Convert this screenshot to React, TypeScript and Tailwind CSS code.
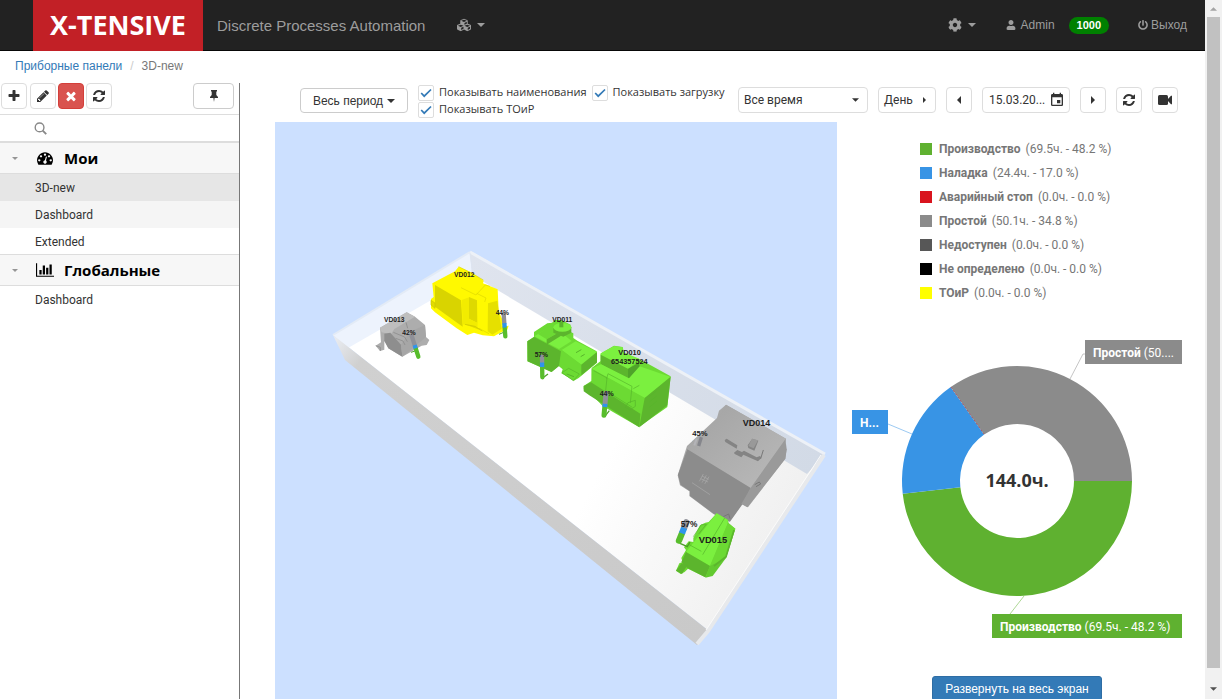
import React from "react";
import { FaCog, FaCubes, FaPowerOff, FaUser } from "react-icons/fa";
import { MdEvent } from "react-icons/md";

const ARIAL = "font-['Liberation_Sans',sans-serif]";

const PATHS = {
  plus: "M1600 736v192q0 40-28 68t-68 28h-416v416q0 40-28 68t-68 28h-192q-40 0-68-28t-28-68v-416h-416q-40 0-68-28t-28-68v-192q0-40 28-68t68-28h416v-416q0-40 28-68t68-28h192q40 0 68 28t28 68v416h416q40 0 68 28t28 68z",
  times:
    "M1490 1322q0 40-28 68l-136 136q-28 28-68 28t-68-28l-294-294-294 294q-28 28-68 28t-68-28l-136-136q-28-28-28-68t28-68l294-294-294-294q-28-28-28-68t28-68l136-136q28-28 68-28t68 28l294 294 294-294q28-28 68-28t68 28l136 136q28 28 28 68t-28 68l-294 294 294 294q28 28 28 68z",
  pencil:
    "M491 1536l91-91-235-235-91 91v107h128v128h107zm523-928q0-22-22-22-10 0-17 7l-542 542q-7 7-7 17 0 22 22 22 10 0 17-7l542-542q7-7 7-17zm-54-192l416 416-832 832h-416v-416zm683 96q0 53-37 90l-166 166-416-416 166-165q36-38 90-38 53 0 91 38l235 234q37 39 37 91z",
  refresh:
    "M1639 1056q0 5-1 7-64 268-268 434.5t-478 166.5q-146 0-282.5-55t-243.5-157l-129 129q-19 19-45 19t-45-19-19-45v-448q0-26 19-45t45-19h448q26 0 45 19t19 45-19 45l-137 137q71 66 161 102t187 36q134 0 250-65t186-179q11-17 53-117 8-23 30-23h192q13 0 22.5 9.5t9.5 22.5zm25-800v448q0 26-19 45t-45 19h-448q-26 0-45-19t-19-45 19-45l138-138q-148-137-349-137-134 0-250 65t-186 179q-11 17-53 117-8 23-30 23h-199q-13 0-22.5-9.5t-9.5-22.5v-7q65-268 270-434.5t480-166.5q146 0 284 55.5t245 156.5l130-129q19-19 45-19t45 19 19 45z",
  gauge:
    "M384 1152q0-53-37.5-90.5t-90.5-37.5-90.5 37.5-37.5 90.5 37.5 90.5 90.5 37.5 90.5-37.5 37.5-90.5zm192-448q0-53-37.5-90.5t-90.5-37.5-90.5 37.5-37.5 90.5 37.5 90.5 90.5 37.5 90.5-37.5 37.5-90.5zm428 481l101-382q6-26-7.5-48.5t-38.5-29.5-48 6.5-30 39.5l-101 382q-60 5-107 43.5t-63 98.5q-20 77 20 146t117 89 146-20 89-117q16-60-6-117t-72-91zm660-33q0-53-37.5-90.5t-90.5-37.5-90.5 37.5-37.5 90.5 37.5 90.5 90.5 37.5 90.5-37.5 37.5-90.5zm-640-640q0-53-37.5-90.5t-90.5-37.5-90.5 37.5-37.5 90.5 37.5 90.5 90.5 37.5 90.5-37.5 37.5-90.5zm448 192q0-53-37.5-90.5t-90.5-37.5-90.5 37.5-37.5 90.5 37.5 90.5 90.5 37.5 90.5-37.5 37.5-90.5zm320 448q0 261-141 483-19 29-54 29h-1402q-35 0-54-29-141-221-141-483 0-182 71-348t191-286 286-191 348-71 348 71 286 191 191 286 71 348z",
  bars: "M640 896v512h-256v-512h256zm384-512v1024h-256v-1024h256zm1024 1152v128h-2048v-1536h128v1408h1920zm-640-896v768h-256v-768h256zm384-384v1152h-256v-1152h256z",
};

function Glyph({ name, box = "0 0 1792 1792", className }: { name: keyof typeof PATHS; box?: string; className: string }) {
  return (
    <svg viewBox={box} className={className} fill="currentColor" aria-hidden="true">
      <path d={PATHS[name]} />
    </svg>
  );
}

function Arrow({ dir, className }: { dir: "down" | "left" | "right"; className: string }) {
  const d = { down: "M0 0h8L4 4z", left: "M4 0v8L0 4z", right: "M0 0v8l4-4z" }[dir];
  return (
    <svg viewBox={dir === "down" ? "0 0 8 4" : "0 0 4 8"} className={className} fill="currentColor" aria-hidden="true">
      <path d={d} />
    </svg>
  );
}

function IconButton({ label, className = "", children }: { label: string; className?: string; children: React.ReactNode }) {
  return (
    <button
      type="button"
      aria-label={label}
      className={`flex h-[26px] shrink-0 items-center justify-center rounded border ${className || "w-[26px] border-[#ddd] bg-white text-[#333]"}`}
    >
      {children}
    </button>
  );
}

function Check({ label }: { label: string }) {
  return (
    <label className="flex h-[17px] items-center whitespace-nowrap">
      <span className="relative mr-[5px] h-4 w-4">
        <input type="checkbox" defaultChecked className="peer block h-4 w-4 appearance-none rounded-[2px] border border-[#ddd] bg-white" />
        <svg viewBox="0 0 16 16" className="pointer-events-none absolute inset-0 hidden h-4 w-4 peer-checked:block" fill="none" stroke="#337ab7" strokeWidth="1.7">
          <path d="M3.2 8l3 3.2L13 4.5" />
        </svg>
      </span>
      {label}
    </label>
  );
}

function Header() {
  return (
    <header className={`flex h-[51px] shrink-0 items-center border-b border-[#080808] bg-[#222] text-[#9d9d9d] ${ARIAL}`}>
      <a href="#" className="ml-[33px] flex h-[51px] w-[170px] shrink-0 items-center justify-center bg-[#c22026] font-['Open_Sans',sans-serif] text-[27px] font-bold text-white">
        X-TENSIVE
      </a>
      <span className="ml-[14px] pt-[2px] text-[15px]">Discrete Processes Automation</span>
      <button type="button" aria-label="Модули" className="ml-8 flex items-center gap-[6px]">
        <FaCubes className="h-[14px] w-[14px]" />
        <Arrow dir="down" className="h-1 w-2" />
      </button>
      <nav className="mr-[18px] ml-auto flex items-center text-[12px]">
        <button type="button" aria-label="Настройки" className="flex items-center gap-[6px]">
          <FaCog className="h-[14px] w-[14px]" />
          <Arrow dir="down" className="h-1 w-2" />
        </button>
        <a href="#" className="ml-[30px] flex items-center gap-[5px]">
          <FaUser className="h-[10px] w-[10px]" />
          Admin
        </a>
        <span className="ml-[14px] rounded-full bg-[#008000] px-2 text-[11px] leading-[17px] font-bold text-white">1000</span>
        <a href="#" className="ml-[29px] flex items-center gap-[3px]">
          <FaPowerOff className="h-[10px] w-[10px]" />
          Выход
        </a>
      </nav>
    </header>
  );
}

function Group({ title, icon, items, active }: { title: string; icon: React.ReactNode; items: string[]; active?: number }) {
  return (
    <section className="not-first:-mt-px">
      <h2 className="flex h-8 items-center border-y border-[#ddd] bg-[#f7f7f7] pl-3 font-['Open_Sans',sans-serif] text-[15px] font-bold text-black">
        <Arrow dir="down" className="h-[3px] w-[6px] text-[#959595]" />
        <span className="ml-[18px] flex w-5 justify-start">{icon}</span>
        <span className="ml-2">{title}</span>
      </h2>
      <ul>
        {items.map((item, i) => (
          <li key={item} className={active === undefined ? "" : i === active ? "bg-[#e6e6e6]" : i === active + 1 ? "bg-[#f5f5f5]" : ""}>
            <a href="#" className="block h-[27px] pl-[35px] text-[12px] leading-[28px] text-[#333]">
              {item}
            </a>
          </li>
        ))}
      </ul>
    </section>
  );
}

function Sidebar() {
  return (
    <aside className="w-60 shrink-0 border-r border-[#777]">
      <div className="flex h-8 items-start gap-[2px] border-b border-[#ddd] pr-[5px] pl-px">
        <IconButton label="Добавить">
          <Glyph name="plus" className="h-[14px] w-[14px]" />
        </IconButton>
        <IconButton label="Изменить" className="ml-px w-[26px] border-[#ddd] bg-white text-[#333]">
          <Glyph name="pencil" className="h-[14px] w-[14px]" />
        </IconButton>
        <IconButton label="Удалить" className="w-[26px] border-[#d43f3a] bg-[#d9534f] text-white">
          <Glyph name="times" className="h-[14px] w-[14px]" />
        </IconButton>
        <IconButton label="Обновить">
          <Glyph name="refresh" className="h-[14px] w-[14px]" />
        </IconButton>
        <IconButton label="Закрепить" className="ml-auto w-[41px] border-[#ccc] bg-white text-[#333]">
          <svg viewBox="0 0 10 12" className="h-3 w-[10px]" fill="currentColor">
            <path d="M2 0h6v1.500H7.300V5L9 7v1H5.600L5 12l-.6-4H1V7l1.700-2V1.500H2z" />
          </svg>
        </IconButton>
      </div>
      <label className="flex h-[26px] items-center pl-[34px]">
        <svg viewBox="0 0 14 14" className="h-[13px] w-[13px]" fill="none" stroke="#888" strokeWidth="1.500">
          <circle cx="6" cy="5.800" r="4.700" />
          <path d="M9.400 9.300l3.800 3.800" strokeWidth="2" />
        </svg>
        <input type="text" aria-label="Поиск" className="ml-2 w-[150px] text-[12px] outline-none" />
      </label>
      <div className="border-t border-[#ddd]">
        <Group title="Мои" active={0} items={["3D-new", "Dashboard", "Extended"]} icon={<Glyph name="gauge" className="ml-px h-4 w-4" />} />
        <Group title="Глобальные" items={["Dashboard"]} icon={<Glyph name="bars" box="0 0 2048 1792" className="h-4 w-[18px]" />} />
      </div>
    </aside>
  );
}

function Toolbar() {
  return (
    <div className="flex h-[39px] shrink-0 items-start pr-[27px] pl-[60px] text-[12px] text-[#333]">
      <button type="button" className={`mt-[5px] flex h-[25px] w-[108px] shrink-0 items-center justify-center gap-1 rounded border border-[#ccc] bg-white ${ARIAL}`}>
        Весь период
        <Arrow dir="down" className="h-1 w-2" />
      </button>
      <div className="ml-[10px] flex w-[320px] flex-wrap gap-x-[5px] pt-px font-['Open_Sans',sans-serif] text-[11px]">
        <Check label="Показывать наименования" />
        <Check label="Показывать загрузку" />
        <Check label="Показывать ТОиР" />
      </div>
      <div className="mt-1 ml-auto flex gap-[10px]">
        <div className="relative">
          <select aria-label="Период" className="h-[26px] w-[130px] appearance-none rounded border border-[#ddd] bg-white pl-[5px]">
            <option>Все время</option>
          </select>
          <Arrow dir="down" className="pointer-events-none absolute top-[11px] right-[9px] h-[4px] w-[7px]" />
        </div>
        <button type="button" className="flex h-[26px] w-[58px] items-center gap-[10px] rounded border border-[#ddd] bg-white pl-[5px]">
          День
          <Arrow dir="right" className="h-[6px] w-[3px]" />
        </button>
        <IconButton label="Назад">
          <Arrow dir="left" className="h-2 w-1" />
        </IconButton>
        <div className="flex h-[26px] w-[88px] items-center rounded border border-[#ddd] bg-white pl-[6px]">
          <input type="text" aria-label="Дата" defaultValue="15.03.20..." className="w-[60px] outline-none" />
          <MdEvent className="h-4 w-4 shrink-0" />
        </div>
        <IconButton label="Вперёд">
          <Arrow dir="right" className="h-2 w-1" />
        </IconButton>
        <IconButton label="Обновить данные">
          <Glyph name="refresh" className="h-[14px] w-[14px]" />
        </IconButton>
        <IconButton label="Камера">
          <svg viewBox="0 0 14 10" className="h-[10px] w-[14px]" fill="currentColor">
            <rect width="10" height="10" rx="1.500" />
            <path d="M9 5l4-4.200h1v8.400h-1z" />
          </svg>
        </IconButton>
      </div>
    </div>
  );
}

const GL = "#7bf03f";
const GM = "#6cda33";
const GD = "#5cb52d";

function Load({ x1, y1, x2, y2, blue = 0.5, green = 0.62, w = 13 }: { x1: number; y1: number; x2: number; y2: number; blue?: number; green?: number; w?: number }) {
  const at = (t: number): [number, number] => [x1 + (x2 - x1) * t, y1 + (y2 - y1) * t];
  const [bx, by] = at(blue);
  const [gx, gy] = at(green);
  return (
    <g strokeWidth={w}>
      <path d={`M${x1} ${y1}L${bx} ${by}`} stroke="#8f9098" strokeLinecap="round" />
      <path d={`M${gx} ${gy}L${x2} ${y2}`} stroke="#58bd2c" strokeLinecap="round" />
      <path d={`M${bx} ${by}L${gx} ${gy}`} stroke="#2f95ec" />
    </g>
  );
}

function Scene() {
  return (
    <svg viewBox="275 122 562 577" className="block h-[577px] w-full bg-[#cce0ff]" preserveAspectRatio="xMidYMin meet" role="img" aria-label="План цеха">
      <defs>
        <linearGradient id="front" gradientUnits="userSpaceOnUse" x1="335" y1="340" x2="700" y2="640">
          <stop offset="0" stopColor="#e8ebf0" />
          <stop offset="0.07" stopColor="#d0d0d0" />
          <stop offset="1" stopColor="#c9c9c9" />
        </linearGradient>
        <linearGradient id="floor" gradientUnits="userSpaceOnUse" x1="600" y1="470" x2="770" y2="560">
          <stop offset="0" stopColor="#ffffff" />
          <stop offset="1" stopColor="#f0f0f0" />
        </linearGradient>
        <linearGradient id="back" gradientUnits="userSpaceOnUse" x1="470" y1="260" x2="820" y2="460">
          <stop offset="0" stopColor="#dfe4ee" />
          <stop offset="1" stopColor="#d2dae6" />
        </linearGradient>
        <linearGradient id="grayTop" x1="0" y1="0" x2="1" y2="1">
          <stop offset="0" stopColor="#a2a2a2" />
          <stop offset="1" stopColor="#bababa" />
        </linearGradient>
      </defs>
      <path d="M333 335L472 252 825 454 709 631z" fill="url(#floor)" />
      <path d="M333 335L470 252l3 24-125 72z" fill="#edf3fd" />
      <path d="M470 252l355 202-18 20-335-199z" fill="url(#back)" />
      <path d="M470 252l355 202" stroke="#edf1f7" strokeWidth="3" />
      <path d="M333 335L470 252" stroke="#e3ebf6" strokeWidth="2" />
      <path d="M470 253l3 23" stroke="#dde4f0" />
      <path d="M333 335l376 296-12 14-352-285z" fill="url(#front)" />
      <path d="M824 455L708 631l-11 13" stroke="#e7e9ec" strokeWidth="4" fill="none" />
      <path d="M821 455L706 630" stroke="#fafafa" strokeWidth="1" fill="none" />

      <g transform="translate(325 245) scale(0.33333)">
        <path d="M165 248l80-46 25 13 30 25 3 36 10 9-8 15-15 2-58 33-42-25-12-22v26l-13 4-13-16 16-10z" fill="#adadad" />
        <path d="M165 248l80-46 25 13-62 37-10 16-28-6z" fill="#bebebe" />
        <path d="M178 266l18-3 32 36 4 36-42-25-12-23z" fill="#8e8e8e" />
        <path d="M228 299l26-38 46-21 3 36-71 59z" fill="#a6a6a6" />
        <path d="M205 262l34 14 8 14M212 280l22 8 6 12M243 232l5 18M152 302l14 5v11" stroke="#858585" strokeWidth="2" fill="none" />
        <path d="M258 322l18-6" stroke="#4fa32a" strokeWidth="3" />
        <Load x1={260} y1={272} x2={280} y2={335} blue={0.45} green={0.6} />

        <path d="M322 115l68-36 11-14 40 18 35 24-2 8 44 18 3 66 20 45 10-2-4 12-18 8-22 12-34-3-26-8-20 7-32-20-65-48-12-12v-28l8-6z" fill="#fff900" />
        <path d="M330 120l78 46 5 79-83-60z" fill="#d9d400" />
        <path d="M432 156l24 10 1 68-25-13z" fill="#ded900" />
        <path d="M410 165l22-8v64l26 13-1 16-44-12z" fill="#f2ec00" />
        <path d="M489 175l28-8 6 46 7 38-28 18-14-10z" fill="#e6e000" />
        <path d="M318 166l12 8v16l-12-10zM420 238l30 6 22 14" stroke="#cbc600" strokeWidth="2" fill="#e2dc00" />
        <path d="M401 65l36 18 38 22M408 128l45 22 28-30 14 4M455 145l28 14-4 12M462 250l30 16" stroke="#dcd700" strokeWidth="2" fill="none" />
        <path d="M522 268l14-6" stroke="#4fa32a" strokeWidth="3" />
        <Load x1={536} y1={208} x2={541} y2={274} blue={0.4} green={0.6} />
        <g fill="#1c1c1c" fontFamily="Liberation Sans, sans-serif" fontWeight="bold" fontSize="20">
          <text x="177" y="232">VD013</text>
          <text x="387" y="96">VD012</text>
          <text x="232" y="270">42%</text>
          <text x="512" y="209">44%</text>
        </g>
      </g>

      <g transform="translate(500 300) scale(0.33333)">
        <path d="M82 124l20-14v-14l40-26 14-2 10-8h18l28 14v22l8 4v14l12 8 58 32 1 34-55 46-14 8-38-22 4-12-12-10-22 18-72-32z" fill={GM} />
        <path d="M82 124l21-13 80 43-6 44-22 18-72-32z" fill={GD} />
        <path d="M103 109l40-24 42 14 30 24-38 24z" fill={GL} />
        <path d="M114 102l38-24 28 16-40 24z" fill={GM} />
        <path d="M140 118l42-24v14l-42 26zM160 84q26 14 54-4v18l-24 12-30-12z" fill={GD} />
        <ellipse cx="187" cy="82" rx="27" ry="13" fill={GL} />
        <path d="M178 66h12v16h-12z" fill={GD} />
        <path d="M185 150l42-26 64 32-47 38z" fill={GL} />
        <path d="M185 150l59 44v32l-62-40z" fill={GM} />
        <path d="M244 194l47-38v31l-47 39z" fill={GD} />
        <path d="M186 218l20-13 32 17-18 20z" fill={GM} stroke="#56b52a" strokeWidth="2" />
        <path d="M200 222l22 8M228 158l16-9M242 170l12-7" stroke="#56b52a" strokeWidth="3" />

        <path d="M251 258l24-16v-38l27-21v-22l40-24 26 4 4 18 50 20 90 50-10 92-82 58-112-64-40-36-17-11z" fill={GM} />
        <path d="M302 160l40-22 26 4 0 14 50 20-34 32-82-26z" fill={GL} />
        <path d="M302 164l82 42v30l-82-44z" fill={GD} />
        <path d="M384 206l32-18 8 26-40 24z" fill="#4fa32a" />
        <path d="M275 206l28-13 84 42 32-36 93 32-78 64-46-26z" fill={GL} />
        <path d="M275 206l160 88-17 88-110-64-34-36z" fill={GM} />
        <path d="M251 258l22-11 148 94-3 41-150-96-17-12z" fill={GD} />
        <path d="M434 294l78-64-10 86-84 66z" fill={GD} />
        <path d="M320 236l4-15 72 38-5 50M281 212l40 22-4 38 80 50M400 266l18-10M448 290l22-18M448 306l22-18M448 322l22-18M384 308l22-7v18l-16 11-14-8z" stroke="#56b52a" strokeWidth="2" fill="none" />
        <path d="M128 234l16-12M314 350l14-18" stroke="#4fa32a" strokeWidth="4" />
        <Load x1={126} y1={170} x2={127} y2={232} blue={0.28} green={0.5} />
        <Load x1={318} y1={280} x2={312} y2={346} blue={0.48} green={0.62} w={15} />
        <g fill="#1c1c1c" fontFamily="Liberation Sans, sans-serif" fontWeight="bold" fontSize="20">
          <text x="157" y="67">VD011</text>
          <text x="104" y="170">57%</text>
          <text x="299" y="288" fontSize="21">44%</text>
          <text x="355" y="164" fontSize="22">VD010</text>
          <text x="333" y="192" fontSize="22">654357524</text>
        </g>
      </g>

      <g transform="translate(660 390) scale(0.33333)">
        <path d="M97 152l6 4-3 8-5-3z" fill="#2f95ec" />
        <path d="M198 44l180 102-4 24 6 8-4 28-112 146-18-10-38 53-48-23-72-54v-14l-28-18-7-30 28-88 90-84 6-22z" fill="#a8a8a8" />
        <path d="M198 44l180 102-106 148L82 178l90-82 8-24z" fill="url(#grayTop)" />
        <path d="M82 178l190 116-24 48-38 53-48-23-72-54v-14l-28-20-8-30z" fill="#8c8c8c" />
        <path d="M272 294l104-146 4 30-4 28-114 146-18-10z" fill="#9a9a9a" />
        <path d="M194 150l6-4 32 20-2 10-34-20zM263 166l14-20 18 6-12 30-18-8zM222 188l10-8 14 6 6-4 38 20 10-4 4 6-10 10-44-20-6 8-20-10z" fill="#848484" />
        <path d="M276 146l18 5-13 24-16-7z" fill="#999" />
        <path d="M310 180l-8 26M284 284l14-8 4 6-14 8M190 380l16-8 4 14" stroke="#777" strokeWidth="3" fill="none" />
        <path d="M96 278l54 36M118 274l12-22M126 278l13-22M134 282l13-22M122 266l22 10M126 258l20 10" stroke="#aaa" strokeWidth="2" />
        <path d="M124 142l-8 26" stroke="#85868c" strokeWidth="10" />
        <path d="M110 146l-7 20" stroke="#b4b4b8" strokeWidth="6" />

        <path d="M170 370l34 20 2 10 20 16-28 88-40 32-22 26-52-26-10 10-12 6-14-10 10-22 10-4-4-12 14-24-6-8 14-18 14 2 0-12 20-38 16-8 10-2z" fill={GM} />
        <path d="M170 370l34 20-2 14-52 124-72-42 38-48z" fill={GL} />
        <path d="M204 398l22 18-28 88-48 24z" fill={GM} />
        <path d="M78 486l72 42-14 34-54-28-18-18z" fill={GD} />
        <path d="M150 528l48-24-40 54-22 5z" fill="#62c930" />
        <path d="M222 420l-24 80-36 28" stroke={GD} strokeWidth="5" fill="none" />
        <path d="M48 542l16-22 18 6-16 26z" fill={GD} />
        <path d="M128 494l66-110M116 432l22-28M84 462l40 22M100 440l24-36h16" stroke="#55b22a" strokeWidth="2" fill="none" />
        <path d="M60 460l22 10 8-14" stroke="#4a9c28" strokeWidth="4" fill="none" />
        <Load x1={79} y1={397} x2={57} y2={452} blue={0.3} green={0.6} w={19} />
        <g fill="#1c1c1c" fontFamily="Liberation Sans, sans-serif" fontWeight="bold">
          <text x="248" y="107" fontSize="27">VD014</text>
          <text x="116" y="459" fontSize="28">VD015</text>
          <text x="97" y="139" fontSize="23">45%</text>
          <text x="62" y="412" fontSize="25">57%</text>
        </g>
      </g>
    </svg>
  );
}

const LEGEND = [
  { name: "Производство", value: "(69.5ч. - 48.2 %)", color: "bg-[#5fb130]" },
  { name: "Наладка", value: "(24.4ч. - 17.0 %)", color: "bg-[#3894e5]" },
  { name: "Аварийный стоп", value: "(0.0ч. - 0.0 %)", color: "bg-[#d9141e]" },
  { name: "Простой", value: "(50.1ч. - 34.8 %)", color: "bg-[#8b8b8b]" },
  { name: "Недоступен", value: "(0.0ч. - 0.0 %)", color: "bg-[#575757]" },
  { name: "Не определено", value: "(0.0ч. - 0.0 %)", color: "bg-black" },
  { name: "ТОиР", value: "(0.0ч. - 0.0 %)", color: "bg-[#ffff00]" },
];

function arc(from: number, to: number) {
  const cx = 180;
  const cy = 151;
  const pt = (r: number, a: number) => `${cx + r * Math.cos((a * Math.PI) / 180)} ${cy + r * Math.sin((a * Math.PI) / 180)}`;
  const big = to - from > 180 ? 1 : 0;
  return `M${pt(115, from)}A115 115 0 ${big} 1 ${pt(115, to)}L${pt(57, to)}A57 57 0 ${big} 0 ${pt(57, from)}Z`;
}

function Stats() {
  return (
    <section className="flex w-[368px] shrink-0 flex-col">
      <ul className="mt-[15px] ml-[83px] text-[12px] text-[#767676]">
        {LEGEND.map((row) => (
          <li key={row.name} className="flex h-6 items-center whitespace-nowrap">
            <span className={`mr-[7px] h-3 w-3 ${row.color}`} />
            <b className="mr-[5px]">{row.name}</b>
            {row.value}
          </li>
        ))}
      </ul>
      <svg viewBox="0 0 368 320" className="mt-[25px] block h-[320px] w-[368px] shrink-0" role="img" aria-label="Загрузка">
        <path d={arc(0, 173.600)} fill="#5fb130" />
        <path d={arc(173.600, 234.800)} fill="#3894e5" />
        <path d={arc(234.800, 360)} fill="#8b8b8b" />
        <path d="M114 57l33 47" stroke="#b05a6a" strokeWidth="1" strokeDasharray="2 2" />
        <path d="M233 49l13-25h2" stroke="#8b8b8b" strokeOpacity=".5" fill="none" />
        <path d="M51 94l24 10" stroke="#3894e5" strokeOpacity=".5" />
        <path d="M187 266l-14 18" stroke="#5fb130" strokeOpacity=".5" />
        <rect x="248" y="10" width="97" height="24" fill="#8b8b8b" />
        <rect x="15" y="80" width="36" height="24" fill="#3894e5" />
        <rect x="155" y="284" width="190" height="24" fill="#5fb130" />
        <g fill="#fff" fontSize="12">
          <text x="256" y="27"><tspan fontWeight="bold">Простой</tspan> (50....</text>
          <text x="23" y="97" fontWeight="bold">Н...</text>
          <text x="163" y="301"><tspan fontWeight="bold">Производство</tspan> (69.5ч. - 48.2 %)</text>
        </g>
        <text x="180" y="157" textAnchor="middle" fontSize="18" fontWeight="bold" fill="#333" fontFamily="Open Sans, sans-serif">144.0ч.</text>
      </svg>
      <button type="button" className={`mt-[26px] ml-[95px] h-[25px] w-[170px] shrink-0 rounded-[3px] border border-[#2e6da4] bg-[#337ab7] text-[12px] text-white ${ARIAL}`}>
        Развернуть на весь экран
      </button>
    </section>
  );
}

export default function App() {
  return (
    <div className="flex h-screen overflow-hidden bg-white font-['Roboto','Noto_Sans',sans-serif] text-[#333]">
      <div className="flex min-w-0 flex-1 flex-col">
        <Header />
        <nav aria-label="Навигация" className={`flex h-8 shrink-0 items-center pb-[3px] pl-[15px] text-[12px] text-[#777] ${ARIAL}`}>
          <a href="#" className="text-[#337ab7]">Приборные панели</a>
          <span className="px-2 text-[#ccc]">/</span>
          <span>3D-new</span>
        </nav>
        <div className="flex min-h-0 flex-1">
          <Sidebar />
          <main className="flex min-w-0 flex-1 flex-col">
            <Toolbar />
            <div className="flex min-h-0 flex-1 overflow-hidden pl-[35px]">
              <div className="min-w-0 flex-1">
                <Scene />
              </div>
              <Stats />
            </div>
          </main>
        </div>
      </div>
      <div className="flex w-[17px] shrink-0 flex-col items-center bg-[#f1f1f1]" aria-hidden="true">
        <div className="flex h-[17px] items-center">
          <Arrow dir="down" className="h-1 w-[7px] rotate-180 text-[#a3a3a3]" />
        </div>
        <div className="w-[13px] flex-1 bg-[#c1c1c1]" />
        <div className="flex h-[31px] items-center pt-[11px]">
          <Arrow dir="down" className="h-1 w-[7px] text-[#505050]" />
        </div>
      </div>
    </div>
  );
}
